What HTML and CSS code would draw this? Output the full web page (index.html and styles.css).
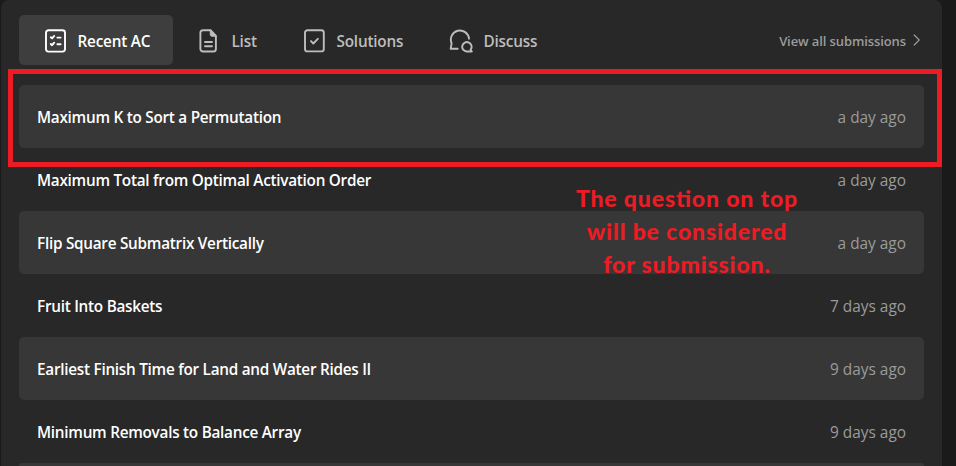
FILE: index.html
```
<!DOCTYPE html>
<html lang="en">
<head>
<meta charset="utf-8">
<title>Recent submissions</title>
<link rel="stylesheet" href="styles.css">
</head>
<body>
<main class="card">
  <header class="toolbar">
    <nav class="tabs">
      <a class="tab tab-active">
        <svg class="icon" viewBox="0 0 24 24"><rect x="2" y="1.2" width="19" height="21.4" rx="2.5"/><path d="M6.8 8.2l1.3 1.2 2.1-2.5M6.8 15l1.3 1.2 2.1-2.5M13.4 8.6h3.2M13.4 15.3h3.2"/></svg>
        <span>Recent AC</span>
      </a>
      <a class="tab tab-list">
        <svg class="icon" viewBox="0 0 24 24"><path d="M12.5 1.2H5A2.6 2.6 0 0 0 2.4 3.8v16.1A2.6 2.6 0 0 0 5 22.5h10.3a2.6 2.6 0 0 0 2.6-2.6V7zM7 13h7M7 17.3h7"/><path class="solid" d="M12.3 1.2v4.4a1.6 1.6 0 0 0 1.6 1.6h4z"/></svg>
        <span>List</span>
      </a>
      <a class="tab tab-solutions">
        <svg class="icon" viewBox="0 0 24 24"><rect x="2" y="1.2" width="18.8" height="21.2" rx="2.5"/><path d="M8 12.1l2.3 2.4 4.5-4.7"/></svg>
        <span>Solutions</span>
      </a>
      <a class="tab tab-discuss">
        <svg class="icon" viewBox="0 0 24 24"><path d="M20 9.7A9.1 9.1 0 1 0 2.6 14.2L1.7 19.8H8.7M22.8 22.5H17.8a4.7 4.7 0 1 1 3.8-1.8z"/></svg>
        <span>Discuss</span>
      </a>
    </nav>
    <a class="view-all"><span>View all submissions</span><svg class="chevron" viewBox="0 0 8 12"><path d="M1.2 1l5 5-5 5"/></svg></a>
  </header>
  <section class="rows">
    <div class="row"><span class="title">Maximum K to Sort a Permutation</span><span class="time">a day ago</span></div>
    <div class="row"><span class="title">Maximum Total from Optimal Activation Order</span><span class="time">a day ago</span></div>
    <div class="row"><span class="title">Flip Square Submatrix Vertically</span><span class="time">a day ago</span></div>
    <div class="row"><span class="title">Fruit Into Baskets</span><span class="time">7 days ago</span></div>
    <div class="row"><span class="title">Earliest Finish Time for Land and Water Rides II</span><span class="time">9 days ago</span></div>
    <div class="row"><span class="title">Minimum Removals to Balance Array</span><span class="time">9 days ago</span></div>
    <div class="row row-edge"></div>
  </section>
</main>
<div class="highlight"></div>
<p class="note">The question on top<br>will be considered<br>for submission.</p>
</body>
</html>
```
FILE: styles.css
```
* { box-sizing: border-box; }
body {
  margin: 0;
  height: 466px;
  overflow: hidden;
  position: relative;
  background: #1a1a1a;
  font-family: "Open Sans", "Noto Sans", sans-serif;
}
.card {
  width: 941px;
  height: 466px;
  margin-left: 1px;
  padding: 15px 18px 0;
  background: #282828;
  border-radius: 8px 8px 0 0;
}
.toolbar { display: flex; justify-content: space-between; height: 70px; }
.tabs { display: flex; height: 50px; }
.tab {
  display: flex;
  align-items: center;
  gap: 9.5px;
  padding-left: 25px;
  color: #bdbdbd;
  font-size: 15.3px;
  font-weight: 600;
  letter-spacing: -0.2px;
  white-space: nowrap;
}
.tab span { margin-top: 1px; }
.tab-active { width: 154px; border-radius: 5px; background: #3e3e3e; color: #fff; }
.tab-list { width: 105px; }
.tab-solutions { width: 146px; }
.icon { width: 24px; height: 24px; margin-top: 1px; flex: none; }
.icon, .chevron { fill: none; stroke: currentColor; stroke-width: 1.9; stroke-linecap: round; stroke-linejoin: round; }
.solid { fill: currentColor; stroke-width: 1; }
.tab-discuss { gap: 10.5px; }
.view-all {
  display: flex;
  align-items: center;
  gap: 7px;
  height: 52px;
  padding-right: 3px;
  color: #9b9b9b;
  font-size: 13px;
  font-weight: 600;
  letter-spacing: -0.1px;
}
.chevron { width: 8px; height: 12px; margin-top: -3px; stroke-width: 1.2; }
.row {
  display: flex;
  align-items: center;
  justify-content: space-between;
  height: 63px;
  padding: 1px 18px 0;
  border-radius: 5px;
}
.row-edge { height: 3px; border-radius: 5px 5px 0 0; }
.row:nth-child(odd) { background: #373737; }
.title { color: #fff; font-size: 15.3px; font-weight: 600; letter-spacing: -0.26px; white-space: nowrap; }
.time { color: #9b9b9b; font-size: 15.4px; }
.highlight {
  position: absolute;
  left: 8px;
  top: 69px;
  width: 934px;
  height: 98px;
  border: 5px solid #ed1c24;
}
.note {
  position: absolute;
  left: 556px;
  top: 182px;
  width: 262px;
  margin: 0;
  color: #ed1c24;
  font: 900 23px/33px Lato, sans-serif;
  font-feature-settings: "liga" 1;
  letter-spacing: 0.85px;
  text-align: center;
}
```
